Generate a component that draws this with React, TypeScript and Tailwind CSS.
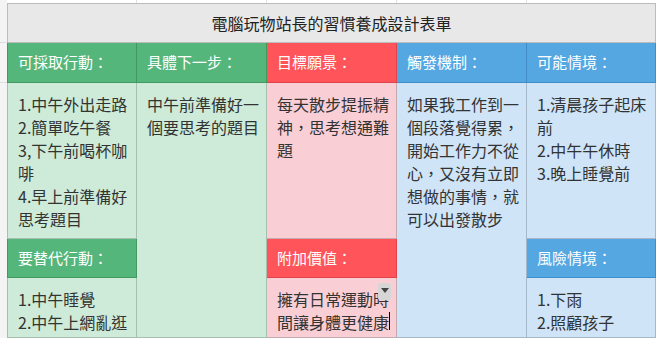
const font = "font-['Noto_Sans_CJK_TC','Noto_Sans',sans-serif]";

type Tone = 'green' | 'red' | 'blue';

const headTone: Record<Tone, string> = {
  green: 'bg-[#55b67b] border-[#41995f]',
  red: 'bg-[#ff5459] border-[#dc4449]',
  blue: 'bg-[#54a7e1] border-[#3f8cc6]',
};

const bodyTone: Record<Tone, string> = {
  green: 'bg-[#cdebd8] border-[#a7bfae]',
  red: 'bg-[#f9cfd5] border-[#c4abb0]',
  blue: 'bg-[#cfe4f7] border-[#a6b8c8]',
};

function Head({ tone, label, first }: { tone: Tone; label: string; first?: boolean }) {
  return (
    <div
      className={`flex items-center pl-[10px] border-r border-b text-white text-[15px] ${headTone[tone]} ${first ? 'border-l' : ''}`}
    >
      {label}
    </div>
  );
}

function Body({
  tone,
  lines,
  first,
  span,
  children,
}: {
  tone: Tone;
  lines: string[];
  first?: boolean;
  span?: boolean;
  children?: React.ReactNode;
}) {
  return (
    <div
      className={`relative pl-[10px] pr-[6px] pt-[10px] border-r border-b text-[16px] leading-[23px] text-[#333] ${bodyTone[tone]} ${first ? 'border-l' : ''} ${span ? 'row-span-3' : ''}`}
    >
      {lines.map((l, i) => (
        <div key={i}>{l}</div>
      ))}
      {children}
    </div>
  );
}

export default function App() {
  return (
    <div className={`w-[662px] h-[338px] overflow-hidden bg-white flex ${font}`}>
      {/* sheet gutter */}
      <div className="w-[7px] shrink-0 bg-[#f4f4f4] flex flex-col">
        <div className="h-[43px] border-b border-[#dedede]" />
        <div className="h-[40px] border-b border-[#dedede]" />
      </div>

      <div className="flex flex-col w-[649px] shrink-0">
        <div className="h-[3px] flex">
          <div className="w-[130px] border-r border-[#e0e0e0]" />
          <div className="w-[130px] border-r border-[#e0e0e0]" />
          <div className="w-[130px] border-r border-[#e0e0e0]" />
          <div className="w-[130px] border-r border-[#e0e0e0]" />
        </div>

        <div className="h-[40px] flex items-center justify-center bg-[#e8e8e8] border border-[#bcbcbc] text-[16px] text-[#222]">
          電腦玩物站長的習慣養成設計表單
        </div>

        <div className="flex-1 grid grid-cols-[130px_130px_130px_130px_129px] grid-rows-[40px_156px_39px_1fr]">
          <Head tone="green" label="可採取行動：" first />
          <Head tone="green" label="具體下一步：" />
          <Head tone="red" label="目標願景：" />
          <Head tone="blue" label="觸發機制：" />
          <Head tone="blue" label="可能情境：" />

          <Body
            tone="green"
            first
            lines={['1.中午外出走路', '2.簡單吃午餐', '3,下午前喝杯咖', '啡', '4.早上前準備好', '思考題目']}
          />
          <Body tone="green" span lines={['中午前準備好一', '個要思考的題目']} />
          <Body tone="red" lines={['每天散步提振精', '神，思考想通難', '題']} />
          <Body
            tone="blue"
            span
            lines={['如果我工作到一', '個段落覺得累，', '開始工作力不從', '心，又沒有立即', '想做的事情，就', '可以出發散步']}
          />
          <Body tone="blue" lines={['1.清晨孩子起床', '前', '2.中午午休時', '3.晚上睡覺前']} />

          <Head tone="green" label="要替代行動：" first />
          <Head tone="red" label="附加價值：" />
          <Head tone="blue" label="風險情境：" />

          <Body tone="green" first lines={['1.中午睡覺', '2.中午上網亂逛']} />
          <Body tone="red" lines={['擁有日常運動時', '間讓身體更健康']}>
            <div className="absolute left-[111px] top-[5px] w-[13px] h-[17px] rounded-[2px] bg-[#d6d6d6] flex items-start justify-center pt-[5px]">
              <div className="w-0 h-0 border-l-[4px] border-r-[4px] border-t-[5px] border-l-transparent border-r-transparent border-t-[#444]" />
            </div>
            <div className="absolute left-[122px] top-[34px] w-px h-[18px] bg-black" />
          </Body>
          <Body tone="blue" lines={['1.下雨', '2.照顧孩子']} />
        </div>
      </div>
    </div>
  );
}
